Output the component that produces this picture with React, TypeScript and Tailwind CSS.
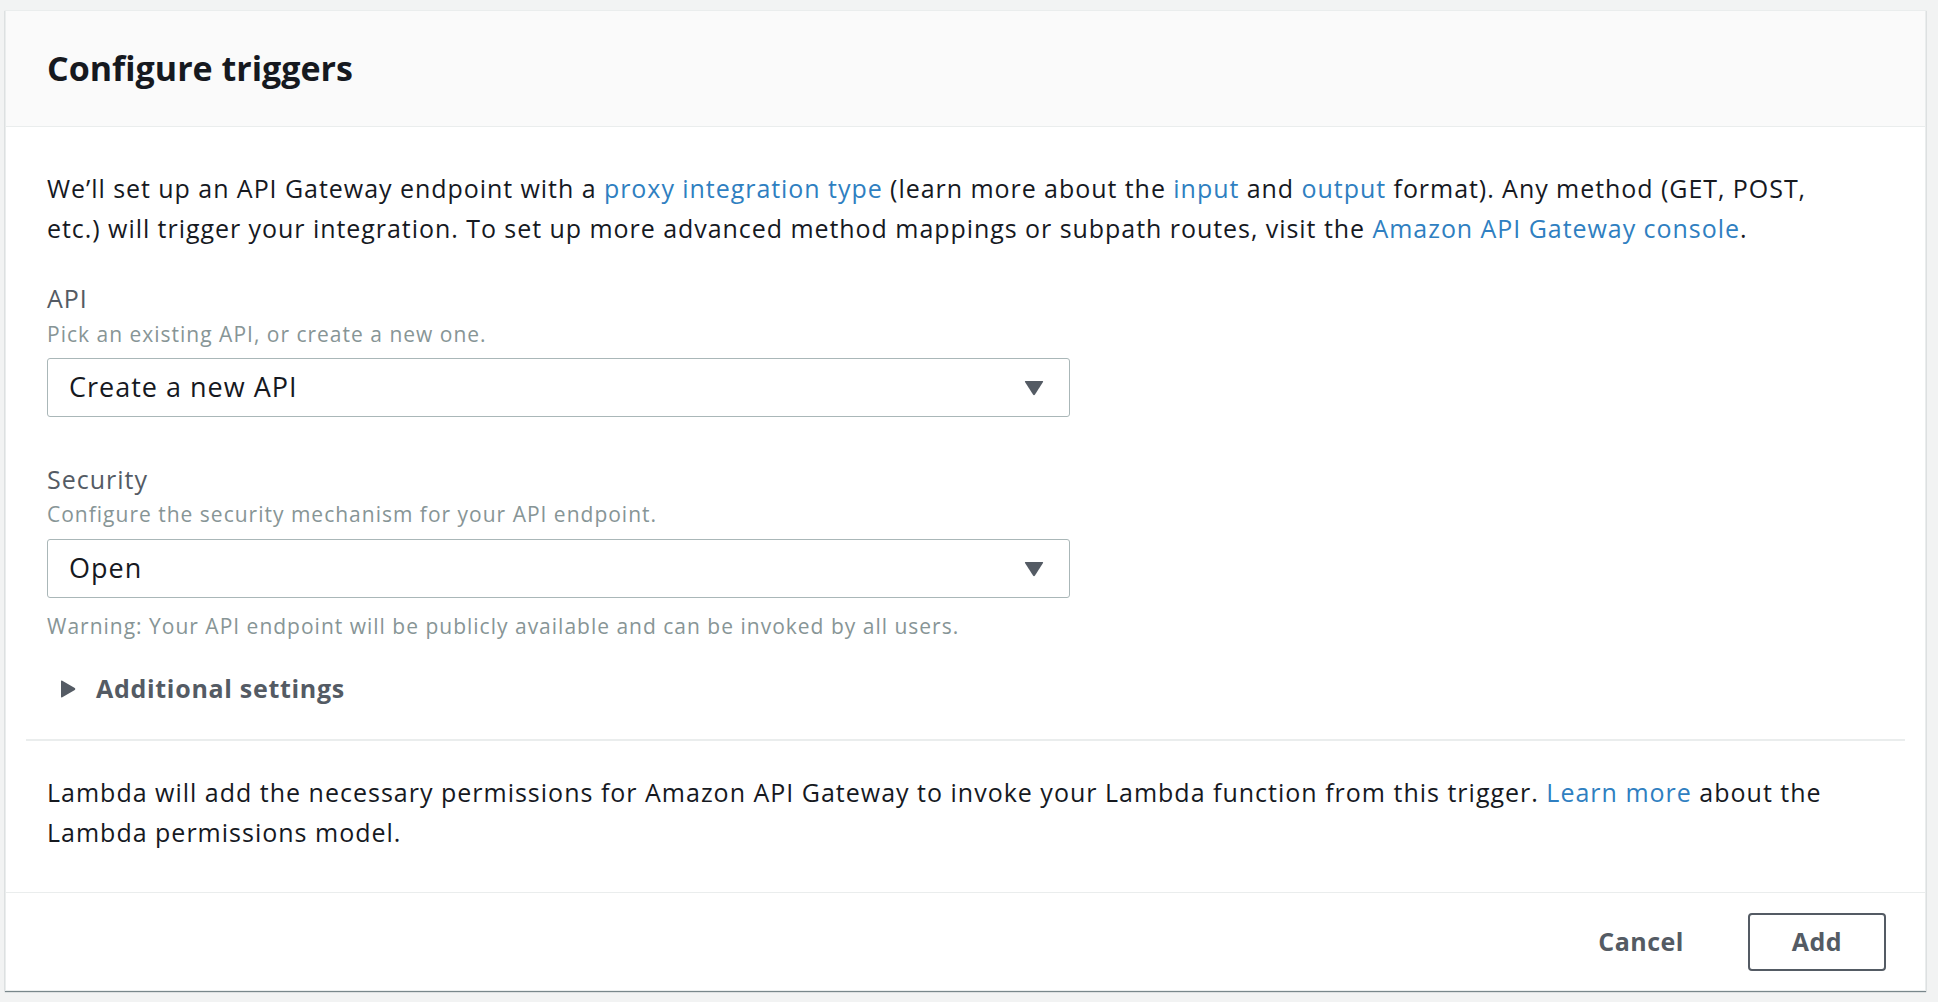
import React from "react";

const Link = ({ children }: { children: React.ReactNode }) => (
  <a className="text-[#2f7fc1] cursor-pointer">{children}</a>
);

const Arrow = () => (
  <svg width="20" height="16" viewBox="0 0 20 16" className="shrink-0">
    <path d="M1.5 1 L18.5 1 Q19.5 1 19 2 L11 14.5 Q10 16 9 14.5 L1 2 Q0.5 1 1.5 1 Z" fill="#545b64" />
  </svg>
);

const Select = ({ value }: { value: string }) => (
  <div className="w-[1023px] h-[59px] border border-[#aab7b8] rounded-[3px] flex items-center justify-between pl-[21px] pr-[25px] bg-white">
    <span className="text-[27px] tracking-[1px] text-[#16191f]">{value}</span>
    <Arrow />
  </div>
);

export default function App() {
  return (
    <div
      className="min-h-screen bg-[#f2f3f3] pt-[10px] pl-[5px] pr-[12px]"
      style={{ fontFamily: '"Open Sans", "Noto Sans", sans-serif' }}
    >
      <div className="bg-white border border-[#eaeded] shadow-[0_1px_1px_0_rgba(0,28,36,0.5)] w-[1921px]">
        <div className="h-[116px] bg-[#fafafa] border-b border-[#eaeded] flex items-center pl-[41px]">
          <h2 className="text-[34px] font-bold text-[#16191f]">Configure triggers</h2>
        </div>
        <div className="pl-[41px] pr-[41px] pt-[41px]">
          <p className="text-[25px] tracking-[0.95px] leading-[40px] text-[#16191f] whitespace-nowrap">
            We’ll set up an API Gateway endpoint with a <Link>proxy integration type</Link> (learn more about the{" "}
            <Link>input</Link> and <Link>output</Link> format). Any method (GET, POST,
            <br />
            etc.) will trigger your integration. To set up more advanced method mappings or subpath routes, visit the{" "}
            <Link>Amazon API Gateway console</Link>.
          </p>

          <div className="mt-[34px] text-[25px] tracking-[1px] leading-[32px] text-[#545b64]">API</div>
          <div className="mt-[6px] text-[21px] tracking-[1px] leading-[28px] text-[#879596]">
            Pick an existing API, or create a new one.
          </div>
          <div className="mt-[10px]">
            <Select value="Create a new API" />
          </div>

          <div className="mt-[46px] text-[25px] tracking-[1px] leading-[32px] text-[#545b64]">Security</div>
          <div className="mt-[5px] text-[21px] tracking-[1px] leading-[28px] text-[#879596]">
            Configure the security mechanism for your API endpoint.
          </div>
          <div className="mt-[11px]">
            <Select value="Open" />
          </div>
          <div className="mt-[14px] text-[21px] tracking-[1px] leading-[28px] text-[#879596]">
            Warning: Your API endpoint will be publicly available and can be invoked by all users.
          </div>

          <div className="mt-[33px] flex items-center h-[32px] pl-[13px] gap-[20px]">
            <svg width="16" height="18" viewBox="0 0 16 18">
              <path d="M1 1.5 Q1 0 2.3 0.8 L14.8 8 Q16 9 14.8 10 L2.3 17.2 Q1 18 1 16.5 Z" fill="#545b64" />
            </svg>
            <span className="text-[25px] font-bold text-[#545b64] tracking-[0.7px]">Additional settings</span>
          </div>
        </div>

        <div className="mx-[20px] mt-[34px] border-t-2 border-[#eaeded]" />

        <div className="pl-[41px] pr-[41px] pt-[31px] pb-[40px]">
          <p className="text-[25px] tracking-[1px] leading-[40px] text-[#16191f] whitespace-nowrap">
            Lambda will add the necessary permissions for Amazon API Gateway to invoke your Lambda function from this trigger.{" "}
            <Link>Learn more</Link> about the
            <br />
            Lambda permissions model.
          </p>
        </div>

        <div className="border-t border-[#eaeded] h-[98px] flex items-center justify-end pr-[39px] gap-[64px]">
          <button className="text-[25px] font-bold tracking-[0.5px] text-[#545b64]">Cancel</button>
          <button className="w-[138px] h-[58px] border-2 border-[#545b64] rounded-[4px] text-[25px] font-bold tracking-[0.5px] text-[#545b64] bg-white">
            Add
          </button>
        </div>
      </div>
    </div>
  );
}
